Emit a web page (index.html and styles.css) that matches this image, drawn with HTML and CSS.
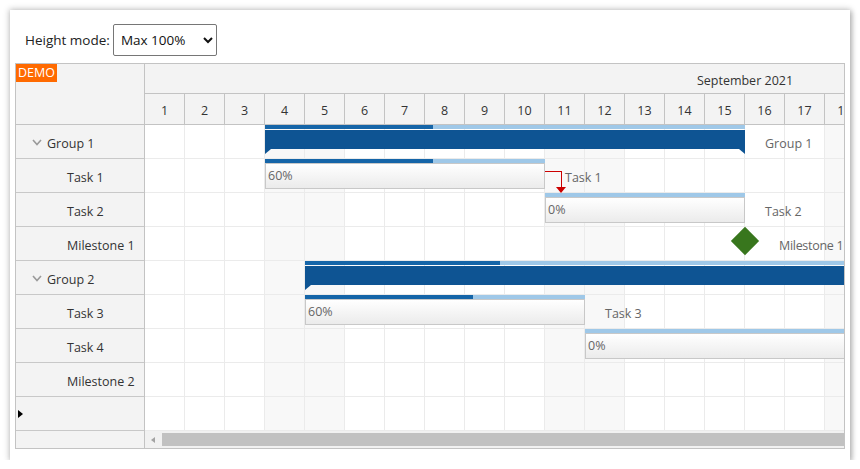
FILE: index.html
```html
<!DOCTYPE html>
<html>
<head>
<meta charset="utf-8">
<link rel="stylesheet" href="styles.css">
</head>
<body>
<div class="frame">
  <div class="toolbar">
    <label class="tb-label" for="hm">Height mode:</label>
    <select id="hm" class="tb-select"><option>Max 100%</option><option>Max 200%</option></select>
  </div>
  <div class="gantt">
    <div class="left">
      <div class="left-head"><span class="demo">DEMO</span></div>
      <div class="lrow group"><svg class="chev" width="10" height="7" viewBox="0 0 10 7"><polyline points="1,1 5,5.5 9,1" fill="none" stroke="#9a9a9a" stroke-width="1.6"/></svg>Group 1</div>
      <div class="lrow task">Task 1</div>
      <div class="lrow task">Task 2</div>
      <div class="lrow task">Milestone 1</div>
      <div class="lrow group"><svg class="chev" width="10" height="7" viewBox="0 0 10 7"><polyline points="1,1 5,5.5 9,1" fill="none" stroke="#9a9a9a" stroke-width="1.6"/></svg>Group 2</div>
      <div class="lrow task">Task 3</div>
      <div class="lrow task">Task 4</div>
      <div class="lrow task">Milestone 2</div>
      <div class="lrow empty"><span class="tri"></span></div>
      <div class="lscroll"></div>
    </div>
    <div class="right">
      <div class="month"><span>September 2021</span></div>
      <div class="days">
        <div class="day">1</div><div class="day">2</div><div class="day">3</div><div class="day">4</div><div class="day">5</div><div class="day">6</div><div class="day">7</div><div class="day">8</div><div class="day">9</div><div class="day">10</div><div class="day">11</div><div class="day">12</div><div class="day">13</div><div class="day">14</div><div class="day">15</div><div class="day">16</div><div class="day">17</div><div class="day">18</div>
      </div>
      <div class="body">
        <div class="cols">
          <div class="col"></div><div class="col"></div><div class="col"></div><div class="col we"></div><div class="col we"></div><div class="col"></div><div class="col"></div><div class="col"></div><div class="col"></div><div class="col"></div><div class="col we"></div><div class="col we"></div><div class="col"></div><div class="col"></div><div class="col"></div><div class="col"></div><div class="col"></div><div class="col we"></div>
        </div>
        <div class="hlines">
          <div class="hl"></div><div class="hl"></div><div class="hl"></div><div class="hl"></div><div class="hl"></div><div class="hl"></div><div class="hl"></div><div class="hl"></div><div class="hl"></div>
        </div>

        <div class="gbar" style="top:0px;left:120px;width:480px">
          <div class="stripe"><div class="done" style="width:35%"></div></div>
          <div class="gmain"></div>
        </div>
        <div class="label" style="top:0px;left:620px">Group 1</div>

        <div class="tbar" style="top:34px;left:120px;width:280px">
          <div class="stripe"><div class="done" style="width:60%"></div></div>
          <div class="box">60%</div>
        </div>
        <div class="label" style="top:34px;left:420px">Task 1</div>

        <div class="link-h"></div>
        <div class="link-v"></div>
        <div class="link-arrow"></div>

        <div class="tbar" style="top:68px;left:400px;width:200px">
          <div class="stripe"><div class="done" style="width:0%"></div></div>
          <div class="box">0%</div>
        </div>
        <div class="label" style="top:68px;left:620px">Task 2</div>

        <div class="milestone" style="top:106px;left:590px"></div>
        <div class="label ms" style="top:102px;left:634px">Milestone 1</div>

        <div class="gbar" style="top:136px;left:160px;width:620px">
          <div class="stripe"><div class="done" style="width:31.5%"></div></div>
          <div class="gmain"></div>
        </div>

        <div class="tbar" style="top:170px;left:160px;width:280px">
          <div class="stripe"><div class="done" style="width:60%"></div></div>
          <div class="box">60%</div>
        </div>
        <div class="label" style="top:170px;left:460px">Task 3</div>

        <div class="tbar" style="top:204px;left:440px;width:400px">
          <div class="stripe"><div class="done" style="width:0%"></div></div>
          <div class="box">0%</div>
        </div>
      </div>
      <div class="hscroll">
        <span class="sarrow"></span>
        <div class="thumb"></div>
      </div>
    </div>
  </div>
</div>
</body>
</html>
```
FILE: styles.css
```css
html, body {
  margin: 0;
  padding: 0;
  background: #fff;
}
body {
  font-family: "Open Sans", "Noto Sans", sans-serif;
  color: #333;
}
.frame {
  margin: 10px 0 0 10px;
  width: 840px;
  height: 450px;
  box-sizing: border-box;
  padding: 0 5px;
  background: #fff;
  box-shadow: 0 0 6px 1px rgba(0,0,0,0.22), 2px 2px 5px rgba(0,0,0,0.18);
}
.toolbar {
  display: flex;
  align-items: center;
  height: 53px;
  box-sizing: border-box;
  padding: 14px 0 7px 10px;
}
.tb-label {
  font-size: 13.5px;
  color: #222;
  margin-right: 3px;
}
.tb-select {
  width: 104px;
  height: 32px;
  box-sizing: border-box;
  border: 1px solid #767676;
  border-radius: 2px;
  background: #fff;
  font-family: "Open Sans", sans-serif;
  font-size: 13.5px;
  color: #111;
  padding-left: 3px;
}
.gantt {
  display: flex;
  border: 1px solid #c3c3c3;
  height: 386px;
  box-sizing: border-box;
  overflow: hidden;
  font-size: 12.5px;
}
.left {
  width: 128px;
  flex: none;
  border-right: 1px solid #c3c3c3;
  background: #f3f3f3;
  display: flex;
  flex-direction: column;
}
.left-head {
  height: 61px;
  box-sizing: border-box;
  border-bottom: 1px solid #c3c3c3;
}
.demo {
  display: inline-block;
  background: #ff6a00;
  color: #fff;
  font-size: 12.5px;
  line-height: 18px;
  padding: 0 2px;
  width: 37px;
}
.lrow {
  height: 34px;
  box-sizing: border-box;
  border-bottom: 1px solid #c8c8c8;
  padding-top: 4px;
  line-height: 29px;
  color: #333;
  white-space: nowrap;
}
.lrow.group {
  display: flex;
  align-items: center;
  padding-left: 16px;
}
.chev {
  margin-right: 5px;
  margin-top: -3px;
}
.lrow.task {
  padding-left: 51px;
}
.lrow.empty {
  display: flex;
  align-items: center;
  padding-left: 2px;
  padding-top: 0;
}
.tri {
  width: 0;
  height: 0;
  border-top: 4px solid transparent;
  border-bottom: 4px solid transparent;
  border-left: 5px solid #000;
}
.lscroll {
  flex: 1;
}
.right {
  flex: 1;
  overflow: hidden;
  display: flex;
  flex-direction: column;
  min-width: 0;
}
.month {
  width: 1200px;
  height: 30px;
  flex: none;
  box-sizing: border-box;
  border-bottom: 1px solid #c3c3c3;
  background: #f3f3f3;
  text-align: center;
  line-height: 27px;
  padding-top: 3px;
  color: #333;
}
.days {
  display: flex;
  height: 31px;
  flex: none;
  border-bottom: 1px solid #c3c3c3;
  box-sizing: border-box;
  background: #f3f3f3;
}
.day {
  width: 40px;
  flex: none;
  box-sizing: border-box;
  border-right: 1px solid #c3c3c3;
  text-align: center;
  line-height: 27px;
  padding-top: 3px;
  color: #333;
}
.body {
  position: relative;
  height: 306px;
  flex: none;
}
.cols {
  display: flex;
  height: 100%;
}
.col {
  width: 40px;
  flex: none;
  box-sizing: border-box;
  border-right: 1px solid #ebebeb;
  background: #fff;
}
.col.we {
  background: #f8f8f8;
}
.hlines {
  position: absolute;
  inset: 0;
}
.hl {
  height: 34px;
  box-sizing: border-box;
  border-bottom: 1px solid #ebebeb;
}
.gbar, .tbar {
  position: absolute;
}
.stripe {
  height: 4px;
  background: #9fc8e8;
}
.stripe .done {
  height: 100%;
  background: #1565a8;
}
.gmain {
  position: relative;
  margin-top: 1px;
  height: 19px;
  background: #0e5493;
}
.gmain::before, .gmain::after {
  content: "";
  position: absolute;
  top: 19px;
  width: 6px;
  height: 5px;
  background: #0e5493;
}
.gmain::before {
  left: 0;
  clip-path: polygon(0 0, 100% 0, 0 100%);
}
.gmain::after {
  right: 0;
  clip-path: polygon(0 0, 100% 0, 100% 100%);
}
.box {
  height: 26px;
  box-sizing: border-box;
  border: 1px solid #c8c8c8;
  background: linear-gradient(#ffffff, #ebebeb);
  color: #666;
  line-height: 24px;
  padding-left: 2px;
}
.label {
  position: absolute;
  line-height: 34px;
  padding-top: 2px;
  color: #666;
  white-space: nowrap;
}
.label.ms {
  letter-spacing: -0.3px;
}
.milestone {
  position: absolute;
  width: 20px;
  height: 20px;
  background: #38761d;
  transform: rotate(45deg);
}
.link-h {
  position: absolute;
  left: 400px;
  top: 46px;
  width: 17px;
  height: 1px;
  background: #cc0000;
}
.link-v {
  position: absolute;
  left: 416px;
  top: 46px;
  width: 1px;
  height: 17px;
  background: #cc0000;
}
.link-arrow {
  position: absolute;
  left: 411px;
  top: 62px;
  width: 0;
  height: 0;
  border-left: 5.5px solid transparent;
  border-right: 5.5px solid transparent;
  border-top: 6px solid #cc0000;
}
.hscroll {
  flex: 1;
  position: relative;
  background: #f1f1f1;
}
.sarrow {
  position: absolute;
  left: 6px;
  top: 6px;
  width: 0;
  height: 0;
  border-top: 3px solid transparent;
  border-bottom: 3px solid transparent;
  border-right: 4px solid #a3a3a3;
}
.thumb {
  position: absolute;
  left: 17px;
  right: 0;
  top: 2px;
  height: 13px;
  background: #c1c1c1;
}
```
